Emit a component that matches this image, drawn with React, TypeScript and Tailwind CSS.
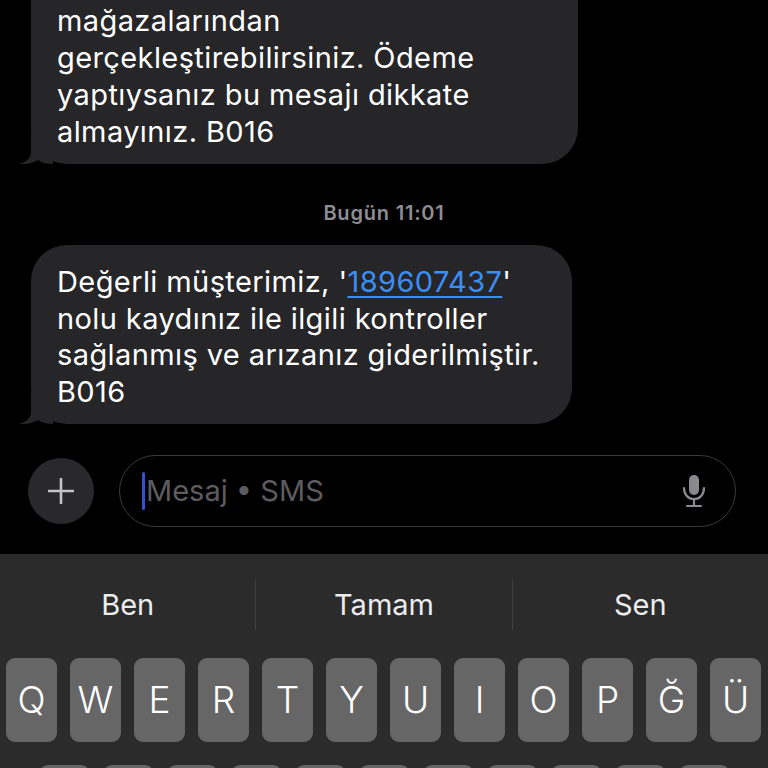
import React from 'react';

const BUBBLE = 'bg-[#262628]';

const Tail: React.FC = () => (
    <svg className="absolute left-[-12px] bottom-0" width="34" height="32" viewBox="0 0 34 32">
        <path d="M12 0 L12 20 C12 26 7 30 0 32 C8 32.5 14 31 19 28 C23 31 28 32 34 32 L34 0 Z" fill="#262628" />
    </svg>
);

const Bubble: React.FC<{ className: string; children: React.ReactNode }> = ({ className, children }) => (
    <div className={`relative ${BUBBLE} text-[29px] tracking-[0.4px] leading-[37px] text-white pl-[26px] ${className}`}>
        {children}
        <Tail />
    </div>
);

const MicIcon: React.FC = () => (
    <svg width="26" height="34" viewBox="0 0 26 34" fill="none">
        <rect x="8" y="1" width="10" height="20" rx="5" fill="#8a8a8e" />
        <path d="M3 14 C3 21 7.5 25 13 25 C18.5 25 23 21 23 14" stroke="#8a8a8e" strokeWidth="2.2" strokeLinecap="round" />
        <path d="M13 25 V31 M6 32 H20" stroke="#8a8a8e" strokeWidth="2.2" strokeLinecap="round" />
    </svg>
);

const row1 = ['Q', 'W', 'E', 'R', 'T', 'Y', 'U', 'I', 'O', 'P', 'Ğ', 'Ü'];
// second row only peeks in at the bottom edge, letters are below the fold
const row2 = ['a', 's', 'd', 'f', 'g', 'h', 'j', 'k', 'l', 'ş', 'i'];

const Key: React.FC<{ label?: string }> = ({ label }) => (
    <div className="w-[51px] h-[84px] shrink-0 rounded-[9px] bg-[#666666] flex items-center justify-center text-white text-[37px] font-light">
        {label}
    </div>
);

const App: React.FC = () => {
    return (
        <div className="w-[768px] h-[768px] bg-black overflow-hidden flex flex-col font-['Inter',sans-serif]">
            {/* thread */}
            <div className="flex flex-col pl-[31px]">
                <Bubble className="w-[547px] h-[164px] pt-[2px] rounded-b-[36px]">
                    <div>mağazalarından</div>
                    <div>gerçekleştirebilirsiniz. Ödeme</div>
                    <div>yaptıysanız bu mesajı dikkate</div>
                    <div>almayınız. B016</div>
                </Bubble>

                <div className="mt-[37px] -ml-[31px] h-[24px] leading-[24px] text-center text-[20px] tracking-[0.8px] font-semibold text-[#8d8d93]">
                    Bugün 11:01
                </div>

                <Bubble className="mt-[20px] w-[541px] h-[179px] pt-[19px] rounded-[36px] !leading-[36.5px]">
                    <div>
                        Değerli müşterimiz, '
                        <span className="text-[#3b8ef5] underline decoration-[1.5px] underline-offset-[4px]">189607437</span>'
                    </div>
                    <div>nolu kaydınız ile ilgili kontroller</div>
                    <div>sağlanmış ve arızanız giderilmiştir.</div>
                    <div>B016</div>
                </Bubble>
            </div>

            {/* compose bar */}
            <div className="mt-[31px] h-[72px] flex items-center pl-[28px] pr-[32px] gap-[25px]">
                <div className="w-[66px] h-[66px] shrink-0 rounded-full bg-[#29292b] flex items-center justify-center">
                    <svg width="26" height="26" viewBox="0 0 26 26">
                        <path d="M13 1 V25 M1 13 H25" stroke="#c4c4c4" strokeWidth="2.6" strokeLinecap="round" />
                    </svg>
                </div>
                <div className="flex-1 h-[72px] rounded-full border-[1.5px] border-[#3a3a3c] flex items-center pl-[22px] pr-[28px]">
                    <div className="w-[3px] h-[38px] bg-[#3550d8] rounded-full mr-[1px]" />
                    <span className="flex-1 text-[29px] text-[#5c5c60]">Mesaj • SMS</span>
                    <MicIcon />
                </div>
            </div>

            {/* keyboard */}
            <div className="mt-[27px] flex-1 bg-[#2b2b2b] flex flex-col">
                <div className="h-[102px] flex items-center">
                    {['Ben', 'Tamam', 'Sen'].map((w, i) => (
                        <React.Fragment key={w}>
                            {i > 0 && <div className="w-px h-[50px] bg-[#3e3e3e]" />}
                            <div className="flex-1 text-center text-[29px] text-[#ececec]">{w}</div>
                        </React.Fragment>
                    ))}
                </div>
                <div className="mt-[2px] flex gap-[13px] pl-[6px]">
                    {row1.map(k => <Key key={k} label={k} />)}
                </div>
                <div className="mt-[23px] flex gap-[13px] justify-center">
                    {row2.map(k => <Key key={k} />)}
                </div>
            </div>
        </div>
    );
};

export default App;
